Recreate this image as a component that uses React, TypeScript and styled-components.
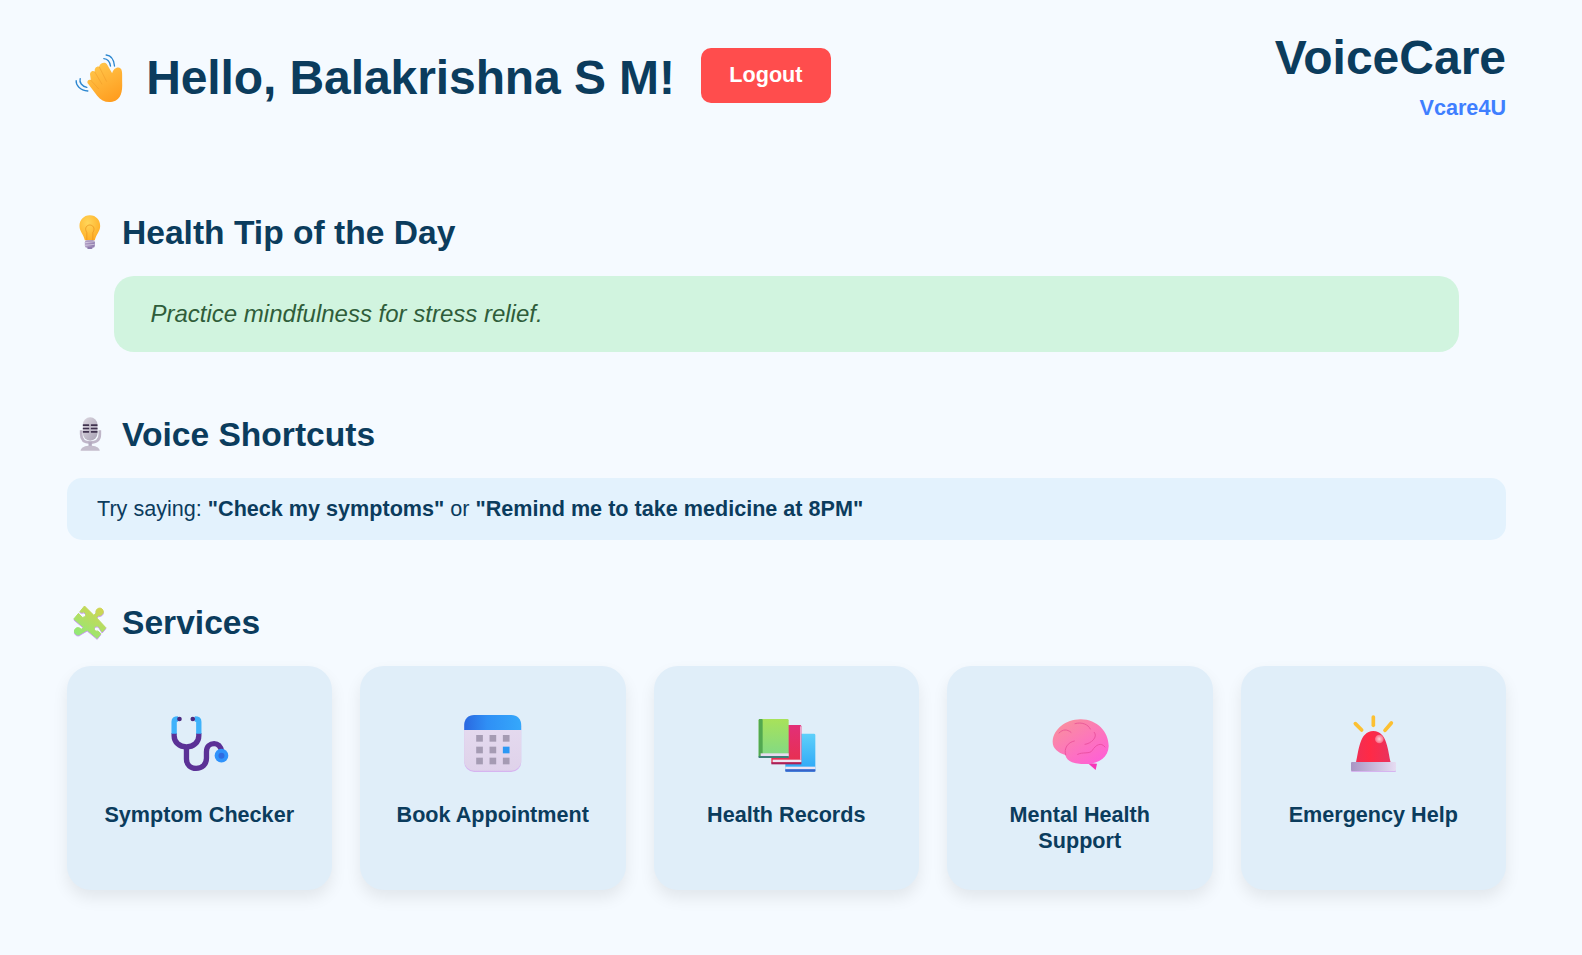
import React from "react";
import styled, { createGlobalStyle } from "styled-components";

const services = [
	{ label: "Symptom Checker", icon: <StethoscopeIcon /> },
	{ label: "Book Appointment", icon: <CalendarIcon /> },
	{ label: "Health Records", icon: <BooksIcon /> },
	{ label: "Mental Health Support", icon: <BrainIcon /> },
	{ label: "Emergency Help", icon: <SirenIcon /> },
];

function HandIcon() {
	return (
		<GreetingSvg viewBox="19.5 0 239 210">
			<defs>
				<linearGradient id="handFill" x1="0.2" y1="0" x2="0.7" y2="1">
					<stop offset="0" stopColor="#ffc84d" />
					<stop offset="1" stopColor="#ff9d1f" />
				</linearGradient>
			</defs>
			<g fill="none" stroke="#2b86d0" strokeWidth="4" strokeLinecap="round">
				<path d="M137 45 C150 46 160 58 162 78" />
				<path d="M130 56 C140 57 148 65 150 78" />
				<path d="M47 122 C46 135 58 151 82 153" />
				<path d="M59 116 C56 127 64 139 79 142" />
			</g>
			<path
				fill="url(#handFill)"
				d="M81 129 C79 122 85 117 91 120 L89 106 C87 97 96 90 103 95 C101 85 108 78 116 80 C118 70 132 64 139 72 L155 100 C158 86 172 78 181 86 C186 92 185 105 185 125 C186 155 183 178 156 185 C138 189 122 182 110 167 Z"
			/>
			<g fill="none" stroke="#f09a28" strokeWidth="3" strokeLinecap="round" opacity="0.5">
				<path d="M103 96 L124 132" />
				<path d="M117 82 L138 124" />
				<path d="M91 121 L114 146" />
			</g>
		</GreetingSvg>
	);
}

function BulbIcon() {
	return (
		<SectionSvg viewBox="19.5 35 166.5 120">
			<defs>
				<radialGradient id="bulbFill" cx="0.4" cy="0.3" r="0.8">
					<stop offset="0" stopColor="#ffd65a" />
					<stop offset="1" stopColor="#ffa91f" />
				</radialGradient>
				<linearGradient id="bulbBase" x1="0" y1="0" x2="1" y2="0">
					<stop offset="0" stopColor="#b3a0c6" />
					<stop offset="1" stopColor="#8f7cad" />
				</linearGradient>
			</defs>
			<path
				fill="url(#bulbFill)"
				d="M88 45 C107 45 119 60 119 77 C119 93 107 102 103 120 L73 120 C69 102 57 93 57 77 C57 60 69 45 88 45 Z"
			/>
			<path fill="none" stroke="#e8921e" strokeWidth="3" opacity="0.7" d="M79 119 L79 97 C70 82 80 74 88 74 C96 74 106 82 97 97 L97 119" />
			<rect x="73" y="120" width="30" height="22" rx="6" fill="url(#bulbBase)" />
			<rect x="80" y="140" width="16" height="6" rx="3" fill="#8f7cad" />
			<path stroke="#e4dcec" strokeWidth="2" d="M74 127 L102 124 M74 135 L102 132" />
		</SectionSvg>
	);
}

function MicIcon() {
	return (
		<SectionSvg viewBox="19.5 27 166.5 120">
			<defs>
				<linearGradient id="micHead" x1="0" y1="0" x2="1" y2="1">
					<stop offset="0" stopColor="#dcd7e0" />
					<stop offset="1" stopColor="#a9a2b5" />
				</linearGradient>
			</defs>
			<path fill="none" stroke="#bfb6c8" strokeWidth="8" d="M62 76 L62 88 C62 106 72 113 89 113 C106 113 118 106 118 88 L118 76" />
			<rect x="84" y="110" width="10" height="16" fill="#b4abc0" />
			<path fill="#c4bdcc" d="M60 137 C62 126 74 122 89 122 C104 122 116 126 118 137 Z" />
			<rect x="67" y="37" width="44" height="70" rx="22" fill="url(#micHead)" />
			<g fill="#40334f">
				<rect x="67" y="58" width="19" height="5" rx="1" />
				<rect x="91" y="58" width="20" height="5" rx="1" />
				<rect x="67" y="68" width="19" height="5" rx="1" />
				<rect x="91" y="68" width="20" height="5" rx="1" />
				<rect x="67" y="78" width="19" height="5" rx="1" />
				<rect x="91" y="78" width="20" height="5" rx="1" />
			</g>
		</SectionSvg>
	);
}

function PuzzleIcon() {
	const piece =
		"M72 33 L100 61 L107 54 A11 11 0 1 1 115 61 L108 68 L136 98 L125 111 L116.5 98 A8 8 0 1 0 112 108 L121 116 L110 130 L80 105 L61 116 A11 11 0 1 1 62 103 L70 97 L40 72 L54 55 L61 63 A8 8 0 1 0 64 52 L58 50 Z";
	return (
		<SectionSvg viewBox="19.5 21 166.5 120">
			<defs>
				<linearGradient id="puzzleFill" x1="0.8" y1="0" x2="0.2" y2="1">
					<stop offset="0" stopColor="#d3d450" />
					<stop offset="1" stopColor="#8eea78" />
				</linearGradient>
			</defs>
			<path fill="#c99cf0" stroke="#c99cf0" strokeWidth="3" strokeLinejoin="round" d={piece} transform="translate(0 3)" />
			<path fill="url(#puzzleFill)" stroke="url(#puzzleFill)" strokeWidth="3" strokeLinejoin="round" d={piece} />
		</SectionSvg>
	);
}

function StethoscopeIcon() {
	return (
		<ServiceSvg viewBox="-2.4 0 270 210">
			<g fill="none" strokeWidth="16">
				<path stroke="#5b3196" d="M58 84 L58 92 C58 112 74 126 95 126 C116 126 132 112 132 92 L132 84" />
				<path stroke="#5b3196" d="M95 126 L95 162 C95 180 108 190 124 190 C142 190 155 178 155 160 L155 140 C155 124 166 116 178 116 C190 116 198 126 201 140" />
				<path stroke="#3fb2fb" d="M58 86 L58 50 C58 44 62 42 70 42" />
				<path stroke="#3fb2fb" d="M132 86 L132 50 C132 44 128 42 120 42" />
			</g>
			<circle cx="74" cy="42" r="7" fill="#4b2a80" />
			<circle cx="114" cy="42" r="7" fill="#4b2a80" />
			<circle cx="200" cy="152" r="20.5" fill="#2f93fb" />
			<circle cx="200" cy="152" r="9" fill="#2f6be0" />
		</ServiceSvg>
	);
}

function CalendarIcon() {
	const cells = [82, 122, 162].flatMap((x) =>
		[90, 125, 158].map((y) => ({ x, y }))
	);
	return (
		<ServiceSvg viewBox="-6.6 0 270 210">
			<defs>
				<linearGradient id="calTop" x1="0" y1="0" x2="1" y2="0">
					<stop offset="0" stopColor="#2a68e0" />
					<stop offset="0.4" stopColor="#2f8ff5" />
					<stop offset="1" stopColor="#35a8fb" />
				</linearGradient>
				<linearGradient id="calBody" x1="0" y1="0" x2="0" y2="1">
					<stop offset="0" stopColor="#e6dcf0" />
					<stop offset="1" stopColor="#dfd2ea" />
				</linearGradient>
			</defs>
			<rect x="42" y="34" width="171" height="167" rx="30" fill="#d6b4f0" />
			<rect x="42" y="30" width="171" height="167" rx="30" fill="url(#calBody)" />
			<path fill="url(#calTop)" d="M42 75 L42 60 C42 42 54 30 72 30 L183 30 C201 30 213 42 213 60 L213 75 Z" />
			{cells.map((c) => (
				<rect
					key={`${c.x}-${c.y}`}
					x={c.x - 4}
					y={c.y}
					width="20"
					height="20"
					fill={c.x === 162 && c.y === 125 ? "#2b98f4" : "#a59bb3"}
				/>
			))}
		</ServiceSvg>
	);
}

function BooksIcon() {
	return (
		<ServiceSvg viewBox="-11 0 270 210">
			<defs>
				<linearGradient id="bookGreen" x1="0" y1="0" x2="0" y2="1">
					<stop offset="0" stopColor="#a8e25a" />
					<stop offset="1" stopColor="#7fd987" />
				</linearGradient>
				<linearGradient id="bookRed" x1="0" y1="0" x2="0" y2="1">
					<stop offset="0" stopColor="#e22f78" />
					<stop offset="1" stopColor="#e8304e" />
				</linearGradient>
				<linearGradient id="bookBlue" x1="0" y1="0" x2="0" y2="1">
					<stop offset="0" stopColor="#5ed0fa" />
					<stop offset="1" stopColor="#2ca6f7" />
				</linearGradient>
			</defs>
			<rect x="122" y="86" width="90" height="114" rx="4" fill="url(#bookBlue)" />
			<rect x="122" y="185" width="90" height="8" fill="#ece4f4" />
			<rect x="122" y="193" width="90" height="7" fill="#3a62c8" />
			<rect x="80" y="60" width="90" height="116" rx="4" fill="url(#bookRed)" />
			<rect x="166" y="64" width="4" height="100" fill="#f0a0c8" />
			<rect x="84" y="164" width="86" height="8" fill="#eee4f2" />
			<rect x="80" y="172" width="90" height="6" fill="#a82058" />
			<rect x="42" y="42" width="90" height="116" rx="4" fill="url(#bookGreen)" />
			<rect x="42" y="42" width="12" height="116" rx="3" fill="#52a850" />
			<rect x="48" y="145" width="84" height="9" fill="#e8dcf0" />
			<rect x="42" y="153" width="90" height="6" fill="#3c8078" />
		</ServiceSvg>
	);
}

function BrainIcon() {
	return (
		<ServiceSvg viewBox="0 0 270 210">
			<defs>
				<linearGradient id="brainFill" x1="0.1" y1="0.1" x2="0.8" y2="1">
					<stop offset="0" stopColor="#f98f9e" />
					<stop offset="0.6" stopColor="#fd72c0" />
					<stop offset="1" stopColor="#ff5fd6" />
				</linearGradient>
			</defs>
			<path fill="#f736b8" d="M158 174 L186 176 L182 195 Z" />
			<path
				fill="url(#brainFill)"
				d="M53 108 C56 72 92 44 136 43 C186 42 222 82 221 124 C220 158 190 178 150 177 C120 177 96 172 91 150 C68 142 52 130 53 108 Z"
			/>
			<g fill="none" stroke="#e2408e" strokeWidth="3" strokeLinecap="round" opacity="0.6">
				<path d="M92 150 C86 130 98 112 118 108" />
				<path d="M72 84 C84 72 96 72 108 82" />
				<path d="M120 56 C140 50 160 58 166 72" />
				<path d="M178 82 C190 96 168 116 150 118" />
				<path d="M128 148 C142 140 166 148 172 136 C182 120 198 110 210 126" />
			</g>
		</ServiceSvg>
	);
}

function SirenIcon() {
	return (
		<ServiceSvg viewBox="-4 0 270 210">
			<defs>
				<linearGradient id="sirenDome" x1="0" y1="0" x2="1" y2="0">
					<stop offset="0" stopColor="#f02e54" />
					<stop offset="0.4" stopColor="#ff2a46" />
					<stop offset="1" stopColor="#e8325e" />
				</linearGradient>
				<linearGradient id="sirenBase" x1="0" y1="0" x2="1" y2="0">
					<stop offset="0" stopColor="#a995c4" />
					<stop offset="1" stopColor="#e6dcf2" />
				</linearGradient>
				<radialGradient id="sirenShine">
					<stop offset="0" stopColor="#fcd0d8" />
					<stop offset="1" stopColor="#f86a84" />
				</radialGradient>
			</defs>
			<g stroke="#fcc032" strokeWidth="11" strokeLinecap="round">
				<path d="M132 36 L132 61" />
				<path d="M78 56 L97 75" />
				<path d="M186 54 L167 76" />
			</g>
			<path fill="url(#sirenDome)" d="M80 172 C88 140 90 78 132 78 C174 78 176 140 184 172 Z" />
			<circle cx="150" cy="102" r="13" fill="url(#sirenShine)" />
			<rect x="65" y="174" width="135" height="27" rx="3" fill="#d6b4f0" />
			<rect x="65" y="171" width="135" height="27" rx="3" fill="url(#sirenBase)" />
		</ServiceSvg>
	);
}

const App = () => {
	return (
		<Page>
			<GlobalStyle />
			<Header>
				<Greeting>
					<HandIcon />
					<Title>Hello, Balakrishna S M!</Title>
					<LogoutButton>Logout</LogoutButton>
				</Greeting>
				<Brand>
					<BrandName>VoiceCare</BrandName>
					<BrandTag>Vcare4U</BrandTag>
				</Brand>
			</Header>

			<Section>
				<SectionTitle>
					<BulbIcon />
					<SectionText>Health Tip of the Day</SectionText>
				</SectionTitle>
				<TipBox>Practice mindfulness for stress relief.</TipBox>
			</Section>

			<Section>
				<SectionTitle>
					<MicIcon />
					<SectionText>Voice Shortcuts</SectionText>
				</SectionTitle>
				<VoiceBox>
					Try saying: <strong>"Check my symptoms"</strong> or{" "}
					<strong>"Remind me to take medicine at 8PM"</strong>
				</VoiceBox>
			</Section>

			<Section>
				<SectionTitle>
					<PuzzleIcon />
					<SectionText>Services</SectionText>
				</SectionTitle>
				<ServiceGrid>
					{services.map((s) => (
						<ServiceCard key={s.label}>
							{s.icon}
							<ServiceLabel>{s.label}</ServiceLabel>
						</ServiceCard>
					))}
				</ServiceGrid>
			</Section>
		</Page>
	);
};

const GlobalStyle = createGlobalStyle`
  html, body {
    margin: 0;
    padding: 0;
    background: #f5faff;
  }
  * {
    box-sizing: border-box;
  }
`;

const Page = styled.div`
  min-height: 100vh;
  padding: 30px 76px 40px 66.5px;
  background: #f5faff;
  color: #0b3c5d;
  font-family: "Liberation Sans", Arial, sans-serif;
`;

const Header = styled.header`
  display: flex;
  justify-content: space-between;
  align-items: center;
  height: 90px;
  margin-bottom: 92px;
`;

const Greeting = styled.div`
  display: flex;
  align-items: center;
`;

const GreetingSvg = styled.svg`
  width: 79.67px;
  height: 70px;
  flex: none;
`;

const Title = styled.h1`
  margin: 0 26px 0 0;
  padding-top: 6px;
  font-size: 48px;
  line-height: 56px;
  letter-spacing: -0.09px;
  font-weight: 700;
  color: #0b3c5d;
`;

const LogoutButton = styled.button`
  width: 130px;
  height: 55px;
  border: none;
  border-radius: 10px;
  background: #ff4d4d;
  color: #ffffff;
  font-family: inherit;
  font-size: 21.6px;
  font-weight: 700;
`;

const Brand = styled.div`
  text-align: right;
`;

const BrandName = styled.div`
  font-size: 48px;
  line-height: 55px;
  font-weight: 700;
  color: #0b3c5d;
`;

const BrandTag = styled.div`
  margin-top: 10px;
  font-size: 21.6px;
  line-height: 25px;
  font-weight: 700;
  color: #3f7fff;
`;

const Section = styled.section`
  margin-bottom: 62px;
`;

const SectionTitle = styled.h2`
  display: flex;
  align-items: center;
  height: 40px;
  margin: 0 0 24px;
  font-size: 33.6px;
  line-height: 40px;
  font-weight: 700;
  color: #0b3c5d;
`;

const SectionSvg = styled.svg`
  width: 55.5px;
  height: 40px;
  flex: none;
`;

const SectionText = styled.span`
  padding-top: 2px;
`;

const TipBox = styled.div`
  height: 76px;
  margin: 0 47.5px;
  padding: 0 36.5px;
  display: flex;
  align-items: center;
  border-radius: 20px;
  background: #d1f4df;
  color: #2f5d3a;
  font-size: 24px;
  font-style: italic;
`;

const VoiceBox = styled.div`
  height: 62px;
  padding: 0 30.5px;
  display: flex;
  align-items: center;
  white-space: pre-wrap;
  border-radius: 15px;
  background: #e3f2fd;
  color: #0b3c5d;
  font-size: 21.6px;
`;

const ServiceGrid = styled.div`
  display: grid;
  grid-template-columns: repeat(5, 1fr);
  gap: 28px;
`;

const ServiceCard = styled.div`
  height: 224px;
  padding: 39px 20px 0;
  display: flex;
  flex-direction: column;
  align-items: center;
  border-radius: 24px;
  background: #e0eef9;
  box-shadow: 0 8px 16px rgba(0, 0, 0, 0.08);
`;

const ServiceSvg = styled.svg`
  width: 90px;
  height: 70px;
  flex: none;
  margin-bottom: 27px;
`;

const ServiceLabel = styled.div`
  text-align: center;
  font-size: 21.6px;
  line-height: 26.4px;
  font-weight: 700;
  color: #0b3c5d;
`;

export default App;
